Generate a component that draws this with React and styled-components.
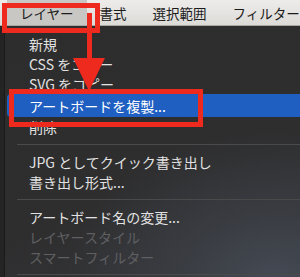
import React from "react";
import styled, { createGlobalStyle } from "styled-components";

const GlobalStyle = createGlobalStyle`
  html, body {
    margin: 0;
    padding: 0;
    background: #262626;
    overflow: hidden;
  }
`;

const Screen = styled.div`
  position: relative;
  width: 300px;
  height: 277px;
  overflow: hidden;
  font-family: "Noto Sans CJK JP", "Noto Sans", sans-serif;
  background: #242424;
`;

const MenuBar = styled.div`
  display: flex;
  align-items: stretch;
  height: 25px;
  padding-left: 7px;
  background: linear-gradient(#eeecea, #dddbd8);
  border-bottom: 1px solid #a9a7a4;
`;

const BarItem = styled.div`
  display: flex;
  align-items: center;
  padding: 0 13px;
  font-size: 13.5px;
  color: #1b1b1b;
  white-space: nowrap;
  background: ${({ $active }) => ($active ? "#c9c7c4" : "transparent")};
`;

const Dropdown = styled.div`
  display: flex;
  flex-direction: column;
  width: 340px;
  height: 260px;
  margin-left: 4px;
  padding-top: 8px;
  border-left: 1px solid #1a1a1a;
  background: radial-gradient(
      ellipse 210px 150px at 270px 255px,
      #444a54 0%,
      rgba(62, 66, 74, 0.6) 45%,
      rgba(43, 43, 43, 0) 100%
    ),
    linear-gradient(160deg, #2d2d2d 0%, #2e2e2f 55%, #38393c 100%);
`;

const Item = styled.div`
  display: flex;
  align-items: center;
  flex: 0 0 ${({ $selected }) => ($selected ? 23 : 20)}px;
  margin-left: 2px;
  padding-left: 22px;
  font-size: 14px;
  white-space: nowrap;
  border-radius: 4px 0 0 4px;
  color: ${({ $disabled, $selected }) =>
    $selected ? "#ffffff" : $disabled ? "#5f5f61" : "#e2e2e2"};
  background: ${({ $selected }) => ($selected ? "#1f5fc2" : "transparent")};
`;

const Separator = styled.div`
  display: flex;
  align-items: center;
  flex: 0 0 15px;
  margin-left: 12px;

  &::before {
    content: "";
    flex: 1;
    height: 1px;
    background: #4a4a4b;
  }
`;

const RedBox = styled.div`
  position: absolute;
  left: ${({ $x }) => $x}px;
  top: ${({ $y }) => $y}px;
  width: ${({ $w }) => $w}px;
  height: ${({ $h }) => $h}px;
  box-sizing: border-box;
  border: 5px solid #ee2a1f;
`;

const ArrowLayer = styled.svg`
  position: absolute;
  left: 0;
  top: 0;
  pointer-events: none;
`;

const menuItems = [
  { label: "新規" },
  { label: "CSS をコピー" },
  { label: "SVG をコピー" },
  { label: "アートボードを複製...", selected: true },
  { label: "削除" },
  { sep: true },
  { label: "JPG としてクイック書き出し" },
  { label: "書き出し形式..." },
  { sep: true },
  { label: "アートボード名の変更..." },
  { label: "レイヤースタイル", disabled: true },
  { label: "スマートフィルター", disabled: true },
  { sep: true },
];

const App = () => {
  return (
    <Screen>
      <GlobalStyle />
      <MenuBar>
        <BarItem $active>レイヤー</BarItem>
        <BarItem>書式</BarItem>
        <BarItem>選択範囲</BarItem>
        <BarItem>フィルター</BarItem>
      </MenuBar>
      <Dropdown>
        {menuItems.map((item, i) =>
          item.sep ? (
            <Separator key={i} />
          ) : (
            <Item key={i} $selected={item.selected} $disabled={item.disabled}>
              {item.label}
            </Item>
          )
        )}
      </Dropdown>

      {/* annotation overlay */}
      <RedBox $x={2} $y={3} $w={98} $h={30} />
      <RedBox $x={9} $y={89} $w={194} $h={38} />
      <ArrowLayer width="300" height="277" viewBox="0 0 300 277">
        <rect x="87" y="13" width="5" height="47" fill="#ee2a1f" />
        <polygon points="73,58 105,58 89,91" fill="#ee2a1f" />
      </ArrowLayer>
    </Screen>
  );
};

export default App;
